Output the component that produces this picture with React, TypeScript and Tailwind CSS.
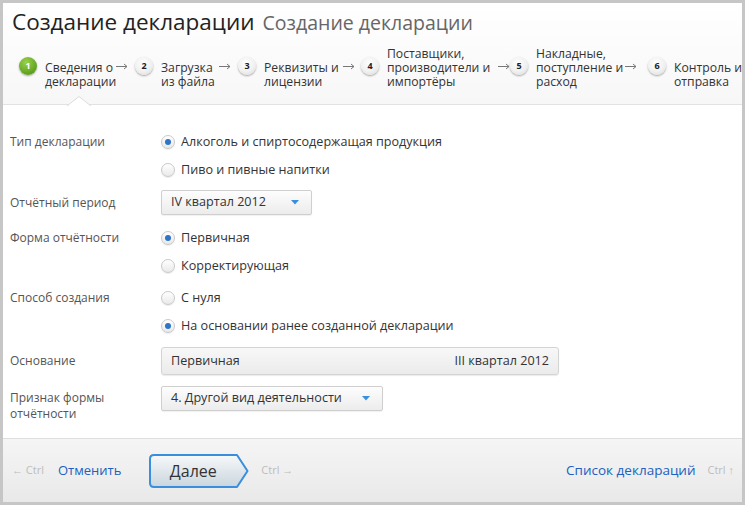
import React from "react";

const font = { fontFamily: '"Open Sans", "Liberation Sans", sans-serif' };

function StepCircle({ n, active }: { n: number; active?: boolean }) {
  return active ? (
    <div className="w-[18px] h-[18px] rounded-full bg-[radial-gradient(circle_at_40%_30%,#9bd14a,#5ea21f_70%,#4a8c16)] shadow-[0_1px_2px_rgba(0,0,0,0.35)] flex items-center justify-center text-white text-[9px] font-bold shrink-0 mb-[14px]">
      {n}
    </div>
  ) : (
    <div className="w-[18px] h-[18px] rounded-full bg-[radial-gradient(circle_at_45%_35%,#ffffff,#f0f0f0_55%,#d6d6d6)] shadow-[0_1px_2px_rgba(0,0,0,0.35)] flex items-center justify-center text-[#222] text-[9px] font-bold shrink-0 mb-[14px]">
      {n}
    </div>
  );
}

function Arrow() {
  return (
    <svg className="shrink-0 mb-[19px] ml-[5px]" width="12" height="7" viewBox="0 0 12 7">
      <path d="M0 3.5 H11 M8 1 L11 3.5 L8 6" fill="none" stroke="#777" strokeWidth="1" />
    </svg>
  );
}

function Step({
  n,
  active,
  lines,
  w,
  arrow,
  gap,
}: {
  n: number;
  active?: boolean;
  lines: string[];
  w: number;
  arrow?: boolean;
  gap?: number;
}) {
  return (
    <div className="flex items-end shrink-0" style={{ marginRight: gap ?? 0 }}>
      <StepCircle n={n} active={active} />
      <div className="ml-[8px] text-[12.2px] leading-[14px] text-[#333] whitespace-nowrap" style={{ width: w }}>
        {lines.map((l, i) => (
          <React.Fragment key={i}>
            {i > 0 && <br />}
            {l === "" ? "\u00a0" : l}
          </React.Fragment>
        ))}
      </div>
      {arrow && <Arrow />}
    </div>
  );
}

function Radio({ checked, label }: { checked?: boolean; label: string }) {
  return (
    <div className="h-[28px] flex items-center">
      <div className="w-[14px] h-[14px] rounded-full border border-[#c9c9c9] bg-[linear-gradient(#ffffff,#e9e9e9)] shadow-[0_1px_1px_rgba(0,0,0,0.08)] flex items-center justify-center shrink-0">
        {checked && <div className="w-[6px] h-[6px] rounded-full bg-[#2f74c5]" />}
      </div>
      <span className="ml-[6px] text-[12.6px] text-[#333]">{label}</span>
    </div>
  );
}

function Select({ text, w }: { text: string; w: number }) {
  return (
    <div
      className="h-[25px] flex items-center justify-between pl-[9px] pr-[12px] border border-[#cfcfcf] rounded-[2px] bg-[linear-gradient(#fdfdfd,#ececec)] shadow-[0_1px_1px_rgba(0,0,0,0.06)]"
      style={{ width: w }}
    >
      <span className="text-[12.6px] text-[#333]">{text}</span>
      <svg width="8" height="5" viewBox="0 0 8 5">
        <path d="M0 0 L8 0 L4 4.5 Z" fill="#3a8ee0" />
      </svg>
    </div>
  );
}

function Label({ children }: { children: React.ReactNode }) {
  return <div className="w-[148px] shrink-0 text-[12px] text-[#555]">{children}</div>;
}

export default function App() {
  return (
    <div className="w-[748px] h-[508px] bg-white" style={font}>
      <div className="w-[745px] h-[505px] border-[3px] border-[#c6c6c6] flex flex-col bg-white">
        {/* Header */}
        <div className="relative h-[102px] shrink-0 bg-[linear-gradient(#ffffff,#f7f7f7)] border-b border-[#e2e2e2]">
          <div className="pl-[9px] pt-[2px] flex items-baseline whitespace-nowrap">
            <span className="text-[22.5px] text-[#222]">Создание декларации</span>
            <span className="ml-[8px] text-[19.5px] text-[#666]">Создание декларации</span>
          </div>
          <div className="absolute left-[16px] top-[44px] flex items-end">
            <Step n={1} active lines={["Сведения о", "декларации"]} w={66} arrow gap={7} />
            <Step n={2} lines={["Загрузка", "из файла"]} w={53} arrow gap={7} />
            <Step n={3} lines={["Реквизиты и", "лицензии"]} w={74} arrow gap={6} />
            <Step n={4} lines={["Поставщики,", "производители и", "импортёры"]} w={106} arrow gap={0} />
            <Step n={5} lines={["Накладные,", "поступление и", "расход"]} w={84} arrow gap={11} />
            <Step n={6} lines={["", "Контроль и", "отправка"]} w={66} />
          </div>
          <svg className="absolute left-[64px] top-[93px]" width="24" height="10" viewBox="0 0 24 10">
            <path d="M0 10 L12 0.5 L24 10" fill="#ffffff" stroke="#dcdcdc" strokeWidth="1" />
          </svg>
        </div>

        {/* Form */}
        <div className="flex-1 bg-white pl-[7px] pt-[23px] flex flex-col">
          <div className="flex">
            <Label>
              <div className="h-[28px] flex items-center">Тип декларации</div>
            </Label>
            <div className="pl-[3px]">
              <Radio checked label="Алкоголь и спиртосодержащая продукция" />
              <Radio label="Пиво и пивные напитки" />
            </div>
          </div>
          <div className="flex mt-[6px]">
            <Label>
              <div className="h-[25px] flex items-center">Отчётный период</div>
            </Label>
            <div className="pl-[3px]">
              <Select text="IV квартал 2012" w={151} />
            </div>
          </div>
          <div className="flex mt-[9px]">
            <Label>
              <div className="h-[28px] flex items-center">Форма отчётности</div>
            </Label>
            <div className="pl-[3px]">
              <Radio checked label="Первичная" />
              <Radio label="Корректирующая" />
            </div>
          </div>
          <div className="flex mt-[4px]">
            <Label>
              <div className="h-[28px] flex items-center">Способ создания</div>
            </Label>
            <div className="pl-[3px]">
              <Radio label="С нуля" />
              <Radio checked label="На основании ранее созданной декларации" />
            </div>
          </div>
          <div className="flex mt-[7px]">
            <Label>
              <div className="h-[28px] flex items-center">Основание</div>
            </Label>
            <div className="pl-[3px]">
              <div className="w-[398px] h-[28px] flex items-center justify-between px-[9px] border border-[#d4d4d4] rounded-[3px] bg-[linear-gradient(#f8f8f8,#ebebeb)] shadow-[0_1px_1px_rgba(0,0,0,0.08)] text-[12.6px] text-[#333]">
                <span>Первичная</span>
                <span>III квартал 2012</span>
              </div>
            </div>
          </div>
          <div className="flex mt-[11px]">
            <Label>
              <div className="pt-[4px] leading-[16px]">
                Признак формы
                <br />
                отчётности
              </div>
            </Label>
            <div className="pl-[3px]">
              <Select text="4. Другой вид деятельности" w={222} />
            </div>
          </div>
        </div>

        {/* Footer */}
        <div className="h-[64px] shrink-0 border-t border-[#dedede] bg-[linear-gradient(#f5f5f5,#e9e9e9)] flex items-center pl-[9px] pr-[8px]">
          <span className="text-[11px] text-[#bdbdbd]">←&nbsp;Ctrl</span>
          <span className="ml-[14px] text-[13px] text-[#2060c0]">Отменить</span>
          <div className="relative ml-[28px] w-[100px] h-[34px] flex items-center">
            <svg className="absolute inset-0" width="100" height="34" viewBox="0 0 100 34">
              <defs>
                <linearGradient id="bg" x1="0" y1="0" x2="0" y2="1">
                  <stop offset="0" stopColor="#f7f9fa" />
                  <stop offset="1" stopColor="#c9d5dd" />
                </linearGradient>
              </defs>
              <path
                d="M5 1 L88 1 L98.5 17 L88 33 L5 33 Q1 33 1 29 L1 5 Q1 1 5 1 Z"
                fill="url(#bg)"
                stroke="#3a8ede"
                strokeWidth="2"
                strokeLinejoin="round"
              />
            </svg>
            <span className="relative w-[88px] text-center text-[16px] text-[#333]">Далее</span>
          </div>
          <span className="ml-[12px] text-[11px] text-[#bdbdbd]">Ctrl&nbsp;→</span>
          <div className="flex-1" />
          <span className="text-[13.5px] text-[#2060c0]">Список деклараций</span>
          <span className="ml-[12px] text-[11px] text-[#bdbdbd]">Ctrl&nbsp;↑</span>
        </div>
      </div>
    </div>
  );
}
